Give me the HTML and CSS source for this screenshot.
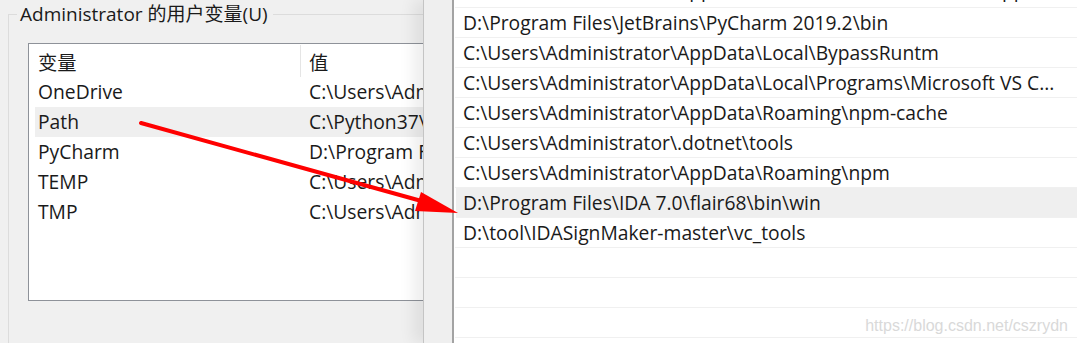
FILE: index.html
```html
<!DOCTYPE html>
<html lang="zh-CN">
<head>
<meta charset="utf-8">
<title>环境变量</title>
<link rel="stylesheet" href="styles.css">
</head>
<body>
<div class="screen">
  <div class="left">
    <div class="group">
      <div class="legend">Administrator 的用户变量(U)</div>
      <div class="listbox">
        <div class="lv-head">
          <div class="hcell hcell-name">变量</div>
          <div class="hcell hcell-value">值</div>
        </div>
        <div class="lv-row"><div class="cell">OneDrive</div><div class="cell">C:\Users\Administrator\OneDrive</div></div>
        <div class="lv-row sel"><div class="cell">Path</div><div class="cell">C:\Python37\Scripts\;C:\Python37\</div></div>
        <div class="lv-row"><div class="cell">PyCharm</div><div class="cell">D:\Program Files\JetBrains\PyCharm</div></div>
        <div class="lv-row"><div class="cell">TEMP</div><div class="cell">C:\Users\Administrator\AppData\Local\Temp</div></div>
        <div class="lv-row"><div class="cell">TMP</div><div class="cell">C:\Users\Administrator\AppData\Local\Temp</div></div>
      </div>
    </div>
  </div>
  <div class="right">
    <div class="frame"></div>
    <div class="pathlist">
      <div class="p-row first">C:\Users\Administrator\AppData\Local\Microsoft\WindowsApps</div>
      <div class="p-row">D:\Program Files\JetBrains\PyCharm 2019.2\bin</div>
      <div class="p-row">C:\Users\Administrator\AppData\Local\BypassRuntm</div>
      <div class="p-row">C:\Users\Administrator\AppData\Local\Programs\Microsoft VS C...</div>
      <div class="p-row">C:\Users\Administrator\AppData\Roaming\npm-cache</div>
      <div class="p-row">C:\Users\Administrator\.dotnet\tools</div>
      <div class="p-row">C:\Users\Administrator\AppData\Roaming\npm</div>
      <div class="p-row sel">D:\Program Files\IDA 7.0\flair68\bin\win</div>
      <div class="p-row">D:\tool\IDASignMaker-master\vc_tools</div>
      <div class="p-row"></div>
      <div class="p-row"></div>
      <div class="p-row"></div>
      <div class="p-row"></div>
    </div>
  </div>
  <svg class="arrow" width="1077" height="343" viewBox="0 0 1077 343">
    <line x1="141" y1="123" x2="425" y2="202" stroke="#ff0000" stroke-width="4" stroke-linecap="round"/>
    <polygon points="458,213 421,192 415,211" fill="#ff0000"/>
  </svg>
  <div class="watermark">https://blog.csdn.net/cszrydn</div>
</div>
</body>
</html>
```

FILE: styles.css
```css
* { box-sizing: border-box; }

html, body {
  margin: 0;
  padding: 0;
}

body {
  width: 1077px;
  height: 343px;
  overflow: hidden;
  font-family: "Open Sans", "Noto Sans CJK SC", sans-serif;
  font-size: 19.3px;
  color: #1a1a1a;
}

.screen {
  position: relative;
  display: flex;
  width: 1077px;
  height: 343px;
  overflow: hidden;
}

/* ---------- left dialog ---------- */
.left {
  width: 423px;
  flex: none;
  height: 343px;
  background: #f0f0f0;
  padding: 14px 0 0 8px;
  overflow: hidden;
}

.group {
  height: 100%;
  border-top: 1px solid #dcdcdc;
  border-left: 1px solid #dcdcdc;
}

.legend {
  width: fit-content;
  margin: -12px 0 0 8px;
  padding: 0 5px 0 3px;
  line-height: 22px;
  font-size: 19px;
  background: #f0f0f0;
}

.listbox {
  margin: 18px 0 0 19px;
  width: 430px;
  height: 258px;
  background: #fff;
  border: 1px solid #8e9299;
}

.lv-head {
  display: flex;
  margin-left: 6px;
  height: 33px;
  padding-top: 1px;
}

.hcell {
  line-height: 31px;
  padding-top: 2px;
}

.hcell-name {
  width: 266px;
  padding-left: 3px;
  border-right: 1px solid #e5e5e5;
}

.hcell-value {
  padding-left: 8px;
}

.lv-row {
  display: grid;
  grid-template-columns: 271px 1fr;
  margin-left: 6px;
  height: 30px;
  line-height: 30px;
  white-space: nowrap;
}

.lv-row.sel {
  background: #efefef;
}

.cell {
  padding-left: 3px;
  overflow: hidden;
}

/* ---------- right dialog ---------- */
.right {
  flex: 1;
  display: flex;
  height: 343px;
  box-shadow: -10px 0 14px rgba(0, 0, 0, 0.07);
  z-index: 1;
}

.frame {
  width: 29px;
  flex: none;
  background: #efefef;
  border-left: 1px solid #c4c4c4;
}

.pathlist {
  flex: 1;
  background: #fff;
  border-left: 2px solid #a3a3a3;
  overflow: hidden;
}

.p-row {
  margin-left: 1px;
  height: 30px;
  line-height: 28px;
  padding-left: 8px;
  padding-top: 1px;
  border-bottom: 1px solid #f0f0f0;
  white-space: nowrap;
  overflow: hidden;
}

.p-row.first {
  margin-top: -22px;
  padding-top: 0;
  line-height: 23px;
}

.p-row.sel {
  background: #efefef;
  margin-left: 2px;
  padding-left: 7px;
}

/* ---------- overlays ---------- */
.arrow {
  position: absolute;
  left: 0;
  top: 0;
  z-index: 5;
  pointer-events: none;
}

.watermark {
  position: absolute;
  right: 9px;
  bottom: 8px;
  z-index: 6;
  font-family: "Liberation Sans", Arial, sans-serif;
  font-size: 16px;
  color: #d9d9d9;
}
```
